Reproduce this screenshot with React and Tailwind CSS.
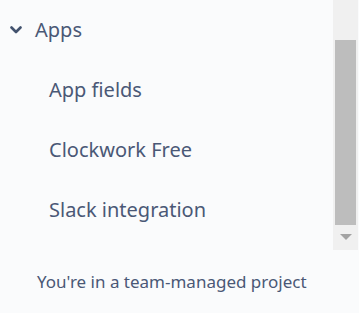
import React from "react";

const items = ["App fields", "Clockwork Free", "Slack integration"];

const App = () => {
  return (
    <div
      className="w-[359px] h-[313px] bg-[#fafbfc] text-[#4a5876] overflow-hidden"
      style={{ fontFamily: '"Noto Sans", "Open Sans", sans-serif' }}
    >
      <div className="flex">
        {/* навигация */}
        <div className="flex-1">
          <div className="h-[60px] flex items-center pl-[10px]">
            <svg width="12" height="8" viewBox="0 0 12 8" className="mr-[13px]">
              <path d="M1.5 1.5 L6 6 L10.5 1.5" fill="none" stroke="#42526e" strokeWidth="2.6" strokeLinecap="round" strokeLinejoin="round" />
            </svg>
            <span className="text-[20px]">Apps</span>
          </div>
          {items.map((item) => (
            <div key={item} className="h-[60px] flex items-center pl-[49px] text-[20px]">
              {item}
            </div>
          ))}
        </div>

        {/* полоса прокрутки */}
        <div className="w-[25px] h-[250px] mr-[1px] bg-[#f0f0f0] flex flex-col items-center pt-[40px]">
          <div className="w-[21px] h-[185px] bg-[#bdbdbd]" />
          <div className="mt-[9px] w-0 h-0 border-l-[6px] border-r-[6px] border-t-[6px] border-l-transparent border-r-transparent border-t-[#a3a3a3]" />
        </div>
      </div>

      <div className="h-[63px] flex items-center pl-[37px] text-[17px]">
        You're in a team-managed project
      </div>
    </div>
  );
};

export default App;
